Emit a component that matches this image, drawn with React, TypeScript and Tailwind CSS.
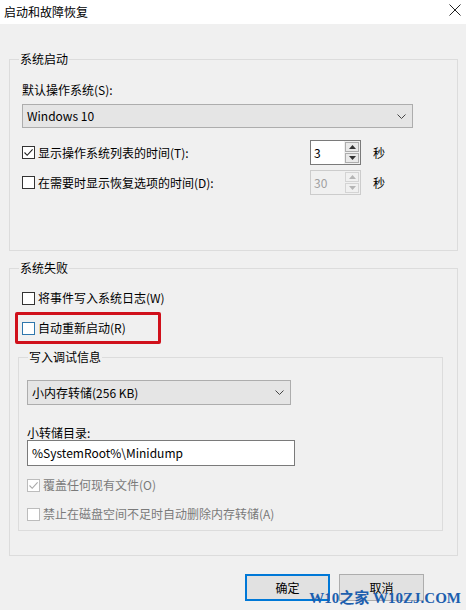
import React from "react";

const FONT = { fontFamily: '"Noto Sans CJK SC", "Noto Sans", sans-serif' };

function Check({ checked, disabled, accent }: { checked?: boolean; disabled?: boolean; accent?: boolean }) {
  const border = disabled ? "border-[#bcbcbc]" : accent ? "border-[#2f77ad]" : "border-[#333333]";
  return (
    <span className={`flex h-[13px] w-[13px] shrink-0 items-center justify-center border bg-white ${border}`}>
      {checked && (
        <svg width="11" height="11" viewBox="0 0 11 11">
          <path d="M1.5 5.5 L4.2 8.3 L9.6 2.4" fill="none" stroke={disabled ? "#a8a8a8" : "#222"} strokeWidth="1.1" />
        </svg>
      )}
    </span>
  );
}

function Chevron() {
  return (
    <svg width="9" height="5" viewBox="0 0 9 5">
      <path d="M0.5 0.5 L4.5 4.5 L8.5 0.5" fill="none" stroke="#444" strokeWidth="1" />
    </svg>
  );
}

function Spin({ value, disabled }: { value: string; disabled?: boolean }) {
  const btn = disabled ? "border-[#d4d4d4] bg-[#f0f0f0]" : "border-[#adadad] bg-[#e9e9e9]";
  const arrow = disabled ? "#b5b5b5" : "#333";
  return (
    <div className={`flex h-[25px] w-[51px] border ${disabled ? "border-[#cccccc] bg-[#f0f0f0]" : "border-[#7a7a7a] bg-white"}`}>
      <div className={`flex flex-1 items-center pl-[3px] text-[12px] ${disabled ? "text-[#a0a0a0]" : "text-black"}`}>{value}</div>
      <div className="flex w-[16px] flex-col gap-[1px] bg-[#f0f0f0] p-[1px]">
        <div className={`flex flex-1 items-center justify-center border ${btn}`}>
          <svg width="7" height="4" viewBox="0 0 7 4"><path d="M0 4 L3.5 0 L7 4 Z" fill={arrow} /></svg>
        </div>
        <div className={`flex flex-1 items-center justify-center border ${btn}`}>
          <svg width="7" height="4" viewBox="0 0 7 4"><path d="M0 0 L3.5 4 L7 0 Z" fill={arrow} /></svg>
        </div>
      </div>
    </div>
  );
}

export default function App() {
  return (
    <div className="relative h-[610px] w-[466px] overflow-hidden bg-[#f0f0f0] text-[12px] leading-[16px] text-black" style={FONT}>
      {/* title bar */}
      <div className="flex h-[24px] items-center justify-between bg-white pl-[4px] pr-[5px]">
        <span className="text-[12px] text-black">启动和故障恢复</span>
        <svg width="12" height="12" viewBox="0 0 12 12" className="mb-[4px]">
          <path d="M0.5 0.5 L11.5 11.5 M11.5 0.5 L0.5 11.5" stroke="#222" strokeWidth="1" />
        </svg>
      </div>

      <div className="px-[9px] pt-[27px]">
        {/* 系统启动 */}
        <fieldset className="w-[449px] border border-[#dcdcdc] px-[12px] pb-[55px]">
          <legend className="ml-[-3px] px-[1px] leading-[16px]">系统启动</legend>
          <div className="mt-[15px]">默认操作系统(S):</div>
          <div className="mt-[6px] flex h-[24px] w-[391px] items-center justify-between border border-[#adadad] bg-[#e5e5e5] pl-[4px] pr-[6px]">
            <span>Windows 10</span>
            <Chevron />
          </div>
          <div className="mt-[12px] flex items-center">
            <div className="flex w-[288px] items-center gap-[3px]">
              <Check checked />
              <span>显示操作系统列表的时间(T):</span>
            </div>
            <Spin value="3" />
            <span className="ml-[12px]">秒</span>
          </div>
          <div className="mt-[5px] flex items-center">
            <div className="flex w-[288px] items-center gap-[3px]">
              <Check />
              <span>在需要时显示恢复选项的时间(D):</span>
            </div>
            <Spin value="30" disabled />
            <span className="ml-[12px]">秒</span>
          </div>
        </fieldset>

        {/* 系统失败 */}
        <fieldset className="mt-[9px] w-[449px] border border-[#dcdcdc] px-[8px] pb-[24px]">
          <legend className="ml-[1px] px-[1px] leading-[16px]">系统失败</legend>
          <div className="mt-[14px] flex items-center gap-[3px] pl-[4px]">
            <Check />
            <span>将事件写入系统日志(W)</span>
          </div>
          <div className="relative mt-[14px] flex items-center gap-[3px] pl-[4px]">
            <Check accent />
            <span>自动重新启动(R)</span>
            <div className="pointer-events-none absolute left-[-3px] top-[-8px] h-[32px] w-[146px] rounded-[2px] border-[3px] border-[#d0101b]" />
          </div>

          {/* 写入调试信息 */}
          <fieldset className="mt-[13px] w-[425px] border border-[#dcdcdc] px-[8px] pb-[8px]">
            <legend className="ml-[1px] px-[1px] leading-[16px]">写入调试信息</legend>
            <div className="mt-[15px] flex h-[25px] w-[264px] items-center justify-between border border-[#adadad] bg-[#e5e5e5] pl-[4px] pr-[6px]">
              <span>小内存转储(256 KB)</span>
              <Chevron />
            </div>
            <div className="mt-[20px] h-[15px] leading-[16px]">小转储目录:</div>
            <div className="flex h-[26px] w-[268px] items-center border border-[#7a7a7a] bg-white pl-[4px]">
              %SystemRoot%\Minidump
            </div>
            <div className="mt-[11px] flex items-center gap-[3px]">
              <Check checked disabled />
              <span className="text-[#7a7a7a]">覆盖任何现有文件(O)</span>
            </div>
            <div className="mt-[13px] flex items-center gap-[3px]">
              <Check disabled />
              <span className="text-[#7a7a7a]">禁止在磁盘空间不足时自动删除内存转储(A)</span>
            </div>
          </fieldset>
        </fieldset>

        {/* buttons */}
        <div className="mt-[18px] flex justify-end gap-[9px] pr-[33px]">
          <button className="flex h-[27px] w-[85px] items-center justify-center border-2 border-[#0078d7] bg-[#e1e1e1] text-[12px]">确定</button>
          <button className="flex h-[27px] w-[85px] items-center justify-center border border-[#adadad] bg-[#e1e1e1] text-[12px]">取消</button>
        </div>
      </div>

      {/* watermark */}
      <div
        className="pointer-events-none absolute bottom-[4px] right-[5px] text-[15px] font-bold leading-[15px] text-[#1d5fae]"
        style={{ fontFamily: '"Liberation Serif", "Noto Sans CJK SC", serif' }}
      >
        W10之家 W10ZJ.COM
      </div>
    </div>
  );
}
